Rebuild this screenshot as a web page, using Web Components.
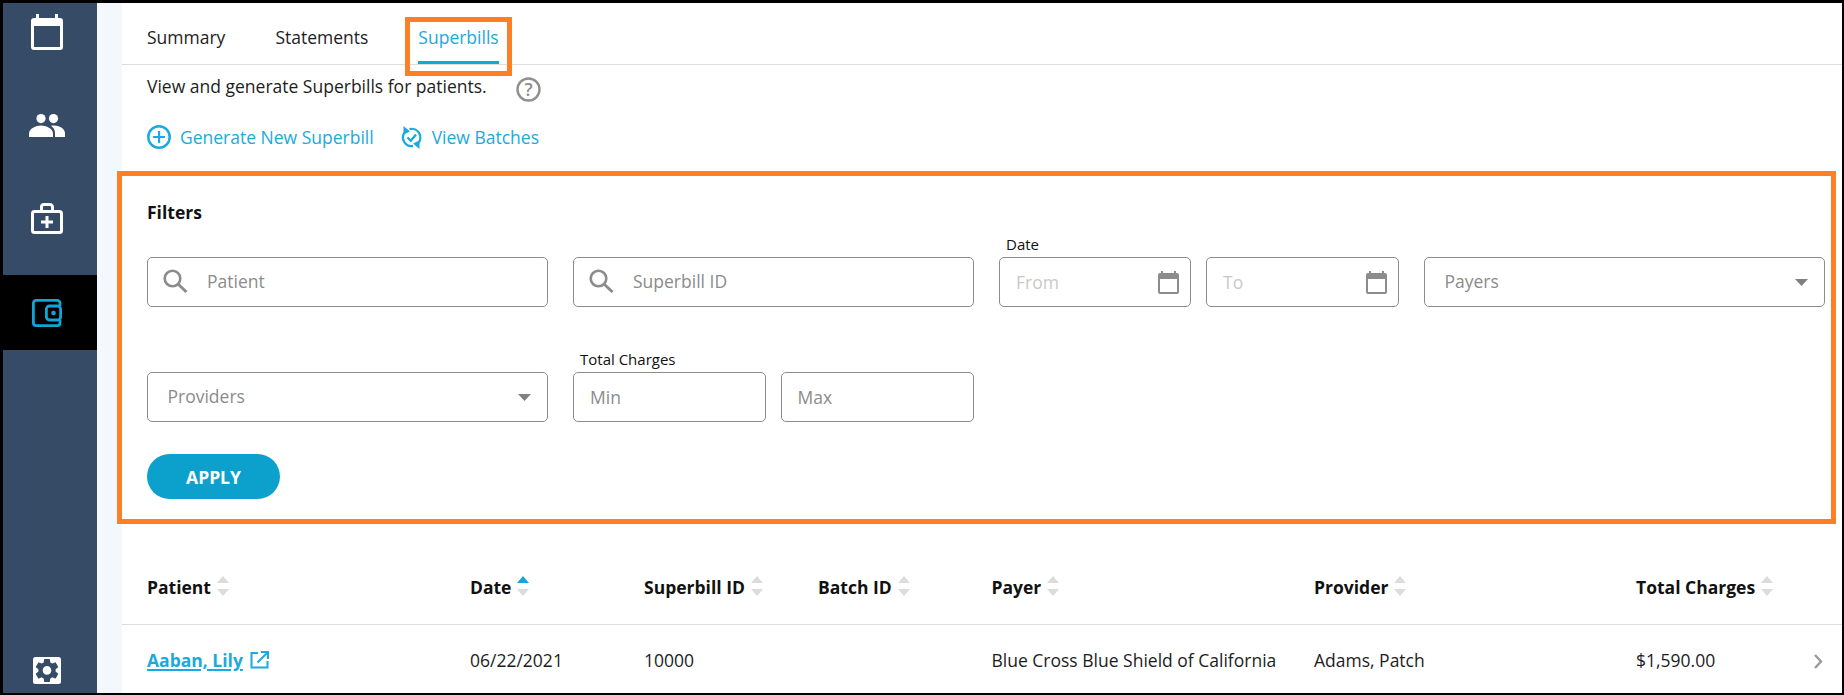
<!DOCTYPE html>
<html lang="en"><head><meta charset="utf-8"><title>Superbills</title>
<style>
html,body{margin:0;padding:0;height:100%;background:#000;overflow:hidden}
body{font-family:"Open Sans",sans-serif;font-size:17.500px;color:#1d1d1d}
</style></head><body>
<app-frame>
  <side-nav slot="nav">
    <nav-item first><svg width="32" height="36" viewBox="0 0 32 36"><path fill="#fff" fill-rule="evenodd" d="M5 0h3v4h16V0h3v4h2a3 3 0 0 1 3 3v26a3 3 0 0 1-3 3H3a3 3 0 0 1-3-3V7a3 3 0 0 1 3-3h2zM3 12v21h26V12z"/></svg></nav-item>
    <nav-item><svg width="36" height="23" viewBox="0 0 36 23"><g fill="#fff"><circle cx="12" cy="4.600" r="4.600"/><circle cx="24.500" cy="4.600" r="4.600"/><path d="M0 23v-3.500c0-5 7-8 12-8s12 3 12 8V23z"/><path d="M26 23v-4c0-3-1.700-5.600-4-7.200 1-.3 2-.3 3-.3 5 0 11 3 11 7.500v4z"/></g></svg></nav-item>
    <nav-item><svg width="32" height="31" viewBox="0 0 32 31"><g fill="none" stroke="#fff" stroke-width="3"><rect x="1.500" y="8.500" width="29" height="21" rx="2"/><path d="M10.500 8V4a2.500 2.500 0 0 1 2.500-2.500h6A2.500 2.500 0 0 1 21.500 4v4"/></g><path fill="#fff" d="M14.500 13h3v4.500H22v3h-4.500V25h-3v-4.500H10v-3h4.500z"/></svg></nav-item>
    <nav-item active><svg width="30" height="28" viewBox="0 0 30 28"><g fill="none" stroke="#0ea5d8" stroke-width="2.800"><path d="M28 7V4a2.600 2.600 0 0 0-2.600-2.600H4A2.600 2.600 0 0 0 1.400 4v20A2.600 2.600 0 0 0 4 26.600h21.400A2.600 2.600 0 0 0 28 24v-3"/><rect x="14.400" y="7" width="14.200" height="14" rx="3"/></g><circle cx="21.500" cy="14" r="2.300" fill="#0ea5d8"/></svg></nav-item>
    <nav-item slot="foot"><svg width="28" height="27" viewBox="0 0 28 27"><rect width="28" height="27" rx="2.500" fill="#fff"/><g transform="translate(-.4 -1) scale(1.200)"><path fill="#364c66" d="M19.140 12.940c.04-.3.06-.61.06-.94 0-.32-.02-.64-.07-.94l2.030-1.580c.18-.14.23-.41.12-.61l-1.920-3.320c-.12-.22-.37-.29-.59-.22l-2.390.96c-.5-.38-1.030-.7-1.620-.94l-.36-2.540c-.04-.24-.24-.41-.48-.41h-3.840c-.24 0-.43.17-.47.41l-.36 2.540c-.59.24-1.130.57-1.620.94l-2.390-.96c-.22-.08-.47 0-.59.22L2.740 8.870c-.12.21-.08.47.12.61l2.030 1.580c-.05.3-.09.63-.09.94s.02.64.07.94l-2.030 1.580c-.18.14-.23.41-.12.61l1.920 3.320c.12.22.37.29.59.22l2.390-.96c.5.38 1.030.7 1.620.94l.36 2.540c.05.24.24.41.48.41h3.840c.24 0 .44-.17.47-.41l.36-2.540c.59-.24 1.130-.56 1.620-.94l2.390.96c.22.08.47 0 .59-.22l1.920-3.320c.12-.22.07-.47-.12-.61l-2.010-1.580zM12 15.600c-1.980 0-3.600-1.620-3.600-3.600s1.620-3.600 3.600-3.600 3.600 1.620 3.600 3.600-1.620 3.600-3.600 3.600z"/></g></svg></nav-item>
  </side-nav>
  <tab-bar>
    <tab-item>Summary</tab-item>
    <tab-item>Statements</tab-item>
    <tab-item active highlight>Superbills</tab-item>
  </tab-bar>
  <page-intro>View and generate Superbills for patients.</page-intro>
  <action-row>
    <action-link><svg slot="icon" width="24" height="24" viewBox="0 0 24 24"><circle cx="12" cy="12" r="10.700" fill="none" stroke="#1ba9de" stroke-width="2.500"/><path fill="#1ba9de" d="M11 6h2.200v4.900H18v2.200h-4.800V18H11v-4.900H6v-2.200h5z"/></svg>Generate New Superbill</action-link>
    <action-link gap="10"><svg slot="icon" width="21" height="23" viewBox="0 0 21 23"><g fill="none" stroke="#1ba9de" stroke-width="2.300"><path d="M4.500 5.500A8.600 8.600 0 0 0 12 20"/><path d="M8.500 3.100A8.600 8.600 0 0 1 16.800 17.500"/><path d="M6.500 11.500l3.300 3.300 5.200-6.300"/></g><path fill="#1ba9de" d="M2.500 0L9 5.500 2.500 8.500zM18.500 23L12 17.500l6.500-3z"/></svg>View Batches</action-link>
  </action-row>
  <filter-panel>
    <text-field icon="search" placeholder="Patient"></text-field>
    <text-field icon="search" placeholder="Superbill ID"></text-field>
    <field-pair label="Date">
      <text-field icon="date" faint placeholder="From"></text-field>
      <text-field icon="date" faint placeholder="To"></text-field>
    </field-pair>
    <text-field caret placeholder="Payers"></text-field>
    <text-field caret placeholder="Providers"></text-field>
    <field-pair label="Total Charges">
      <text-field plain placeholder="Min"></text-field>
      <text-field plain placeholder="Max"></text-field>
    </field-pair>
  </filter-panel>
  <bill-table></bill-table>
</app-frame>
<script>
function def(name, css, html){
  customElements.define(name, class extends HTMLElement{
    constructor(){super();const r=this.attachShadow({mode:'open'});
      r.innerHTML='<style>'+css+'</style>'+(typeof html==='function'?html(this):html);}
  });
}
def('app-frame',
 ':host{display:flex;box-sizing:border-box;width:1844px;height:695px;padding:3px 2px 2px 3px;background:#000}'+
 '.band{width:25px;background:#f4f8fc;flex:none}'+
 'main{flex:1;min-width:0;background:#fff;display:flex;flex-direction:column}',
 '<slot name="nav"></slot><div class="band"></div><main><slot></slot></main>');
def('side-nav',
 ':host{display:flex;flex-direction:column;width:94px;flex:none;background:#364c66;overflow:hidden;height:690px}'+
 '.top{display:flex;flex-direction:column;gap:18px;margin-top:-9px}'+
 '.foot{margin-top:auto;padding-bottom:9px;display:flex;flex-direction:column}',
 '<div class="top"><slot></slot></div><div class="foot"><slot name="foot"></slot></div>');
def('nav-item',
 ':host{display:flex;align-items:center;justify-content:center;box-sizing:border-box;padding-right:6px;height:75px;flex:none}'+
 ':host([first]){margin-bottom:1px}'+
 ':host([active]){background:#000;margin-top:1px}'+
 ':host([slot=foot]){height:27px}',
 '<slot></slot>');
def('tab-bar',
 ':host{display:flex;gap:50px;padding-left:25px;height:61px;border-bottom:1px solid #ddd;flex:none}',
 '<slot></slot>');
def('tab-item',
 ':host{display:flex;position:relative;box-sizing:border-box;height:61px;padding-top:23px;line-height:22px;font-size:17.500px;color:#1d1d1d;border-bottom:3px solid transparent}'+
 ':host([active]){color:#1ba9de;border-bottom-color:#12a7dc}'+
 ':host([highlight])::after{content:"";position:absolute;left:-13px;right:-13px;top:14px;bottom:-15px;border:5px solid #ff7f27}',
 '<slot></slot>');
def('page-intro',
 ':host{display:flex;align-items:flex-start;height:46px;padding:10px 0 0 25px;box-sizing:border-box;line-height:22px;flex:none;font-size:17.500px;color:#1d1d1d}'+
 '.help{margin:2px 0 0 29px;width:25px;height:25px}',
 '<slot></slot><svg class="help" viewBox="0 0 25 25"><circle cx="12.500" cy="12.500" r="11" fill="none" stroke="#8f8f8f" stroke-width="2.400"/><text x="12.500" y="18.800" text-anchor="middle" font-family="Open Sans" font-size="18" font-weight="600" fill="#8f8f8f">?</text></svg>');
def('action-row',
 ':host{display:flex;gap:27px;padding-left:25px;height:60px;flex:none;box-sizing:border-box;padding-top:13px}',
 '<slot></slot>');
def('action-link',
 ':host{display:flex;align-items:center;gap:9px;height:26px;color:#1ba9de;font-size:17.500px}'+
 ':host([gap="10"]){gap:10px}svg{display:block}',
 '<slot name="icon"></slot><slot></slot>');
def('filter-panel',
 ':host{display:block;box-sizing:border-box;margin:0 6px 0 -5px;height:353px;border:5px solid #ff7f27;padding:25px 6px 20px 25px;background:#fff;flex:none}'+
 'h2{margin:0 0 12px;font-size:17.500px;line-height:22px;font-weight:700;color:#111}'+
 '.grid{display:grid;grid-template-columns:401px 401px 400px 401px;column-gap:25px;row-gap:43px}'+
 'button{display:block;margin-top:32px;width:133px;height:45px;border:0;border-radius:23px;background:#0ca1cd;color:#fff;font:700 17.500px "Open Sans",sans-serif;padding:0}',
 '<h2>Filters</h2><div class="grid"><slot></slot></div><button>APPLY</button>');
def('field-pair',
 ':host{display:block}'+
 '.l{height:22px;font-size:15px;line-height:18px;padding-left:7px;color:#111;box-sizing:border-box}'+
 '.r{display:grid;grid-template-columns:calc(50% - 8px) 1fr;column-gap:15px}',
 t=>'<div class="l">'+t.getAttribute('label')+'</div><div class="r"><slot></slot></div>');
const ICONS={
 search:'<svg class="lead" width="25" height="24" viewBox="0 0 25 24"><circle cx="9.500" cy="9.500" r="7.800" fill="none" stroke="#8c8c8c" stroke-width="2.600"/><path d="M15 15l8.500 8" stroke="#8c8c8c" stroke-width="3"/></svg>',
 date:'<svg class="trail" width="21" height="23" viewBox="0 0 21 23"><path fill="#8c8c8c" fill-rule="evenodd" d="M3 0h2v2h11V0h2v2h1a2 2 0 0 1 2 2v17a2 2 0 0 1-2 2H2a2 2 0 0 1-2-2V4a2 2 0 0 1 2-2h1zM2 8v13h17V8z"/></svg>',
 caret:'<svg class="trail" width="13" height="7" viewBox="0 0 13 7"><path fill="#808080" d="M0 0h13L6.500 7z"/></svg>'
};
def('text-field',
 ':host{display:flex;align-items:center;box-sizing:border-box;height:50px;margin-top:22px;border:1px solid #8c8c8c;border-radius:5px;background:#fff;color:#8b8b8b;font-size:17.500px;padding:0 16px;min-width:0}'+
 ':host-context(field-pair){margin-top:0}'+
 ':host([icon=search]){padding-left:15px}'+
 ':host([icon=date]){padding-right:11px}'+
 '.lead{margin-right:19px;flex:none;position:relative;top:-1px}'+
 '.t{flex:1;position:relative;top:-1px}.trail{flex:none}'+
 ':host([faint]){color:#c9c9c9}'+
 ':host([caret]){padding-left:19.500px}'+
 ':host([faint]) .t{top:0}:host([plain]) .t{top:0}',
 t=>{const i=t.getAttribute('icon');const lead=i==='search'?ICONS.search:'';const trail=i==='date'?ICONS.date:(t.hasAttribute('caret')?ICONS.caret:'');
   return lead+'<span class="t">'+t.getAttribute('placeholder')+'</span>'+trail;});
def('sort-head',
 ':host{display:flex;align-items:center;gap:6px;font-weight:700;color:#111;font-size:17.500px}'+
 '.s{display:flex;flex-direction:column;gap:6px;flex:none;position:relative;top:-.5px}'+
 'i{display:block;width:0;height:0;border-left:6px solid transparent;border-right:6px solid transparent}'+
 '.u{border-bottom:7px solid #dcdcdc}.d{border-top:7px solid #dcdcdc}'+
 ':host([sorted]) .u{border-bottom-color:#12a7dc}',
 '<slot></slot><span class="s"><i class="u"></i><i class="d"></i></span>');
def('bill-table',
 ':host{display:block;margin-top:30px;flex:1;min-height:0;font-size:17.500px;color:#1d1d1d}'+
 '.row{display:grid;grid-template-columns:323px 174px 174px 173.500px 322.500px 322px 1fr;padding-left:25px;align-items:center}'+
 '.h{box-sizing:border-box;height:71px;padding-bottom:5px;border-bottom:1px solid #ddd}'+
 '.b{height:69px;box-sizing:border-box}'+
 '.name{display:inline-flex;align-items:center;gap:7px;font-weight:700;color:#1ba9de}'+
 '.name u{text-decoration-thickness:2px;text-underline-offset:2px}'+
 '.last{display:flex;justify-content:space-between;padding-right:19px;align-items:center}',
 '<div class="row h"><sort-head>Patient</sort-head><sort-head sorted>Date</sort-head><sort-head>Superbill ID</sort-head><sort-head>Batch ID</sort-head><sort-head>Payer</sort-head><sort-head>Provider</sort-head><sort-head>Total Charges</sort-head></div>'+
 '<div class="row b"><span class="name"><u>Aaban, Lily</u><svg width="19" height="18" viewBox="0 0 19 18"><path fill="none" stroke="#1ba9de" stroke-width="2" d="M8 2H1.500v14.500h16V10M7.500 11.500L17 2M11 1h7v7"/></svg></span><span>06/22/2021</span><span>10000</span><span></span><span>Blue Cross Blue Shield of California</span><span>Adams, Patch</span><span class="last">$1,590.00<svg width="9" height="15" viewBox="0 0 9 15" style="position:relative;top:2px"><path fill="none" stroke="#9a9a9a" stroke-width="2.400" d="M1 1l6 6.500L1 14"/></svg></span></div>');
</script>
</body></html>
